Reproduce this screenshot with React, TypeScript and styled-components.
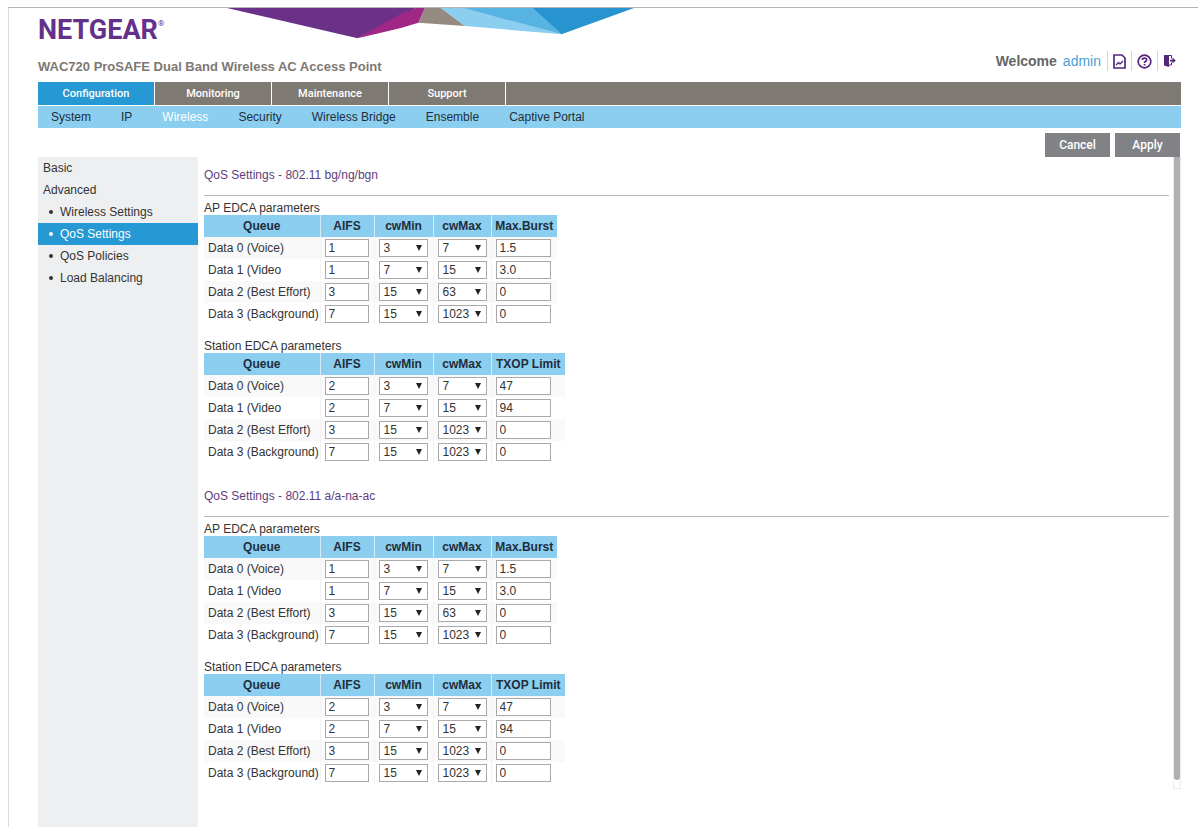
import React, { useId, useState } from "react";
import styled, { createGlobalStyle } from "styled-components";

const sans = '"Liberation Sans", Arial, Helvetica, sans-serif';

const GlobalStyle = createGlobalStyle`
  *, *::before, *::after { box-sizing: border-box; }
  body {
    margin: 0;
    padding: 7px 0 7px 8px;
    background: #fff;
    color: #333;
    font: 12px/22px ${sans};
  }
  button, input, select { font: inherit; color: inherit; }
`;

const Page = styled.div`
  display: flex;
  flex-direction: column;
  min-height: calc(100vh - 14px);
  padding: 0 17px 0 29px;
  border-top: 1px solid #b4b4b6;
  border-left: 1px solid #dcdcdc;
`;

const Header = styled.header`
  display: flex;
  height: 42px;
`;

const Logo = styled.div`
  flex: 0 0 189px;
  padding-top: 6px;
  color: #63308a;
  font: 700 27px/32px Roboto, ${sans};
  sup {
    font-size: 8px;
    font-weight: 400;
    line-height: 8px;
    vertical-align: 13px;
  }
`;

const TitleBar = styled.div`
  display: flex;
  justify-content: space-between;
  height: 32px;
`;

const Product = styled.h1`
  margin: 6px 0 0;
  color: #7d7873;
  font-size: 13px;
  line-height: 22px;
`;

const Account = styled.div`
  display: flex;
  height: 20px;
  margin-top: 1px;
  align-items: center;
  color: #666;
  font-size: 14px;
  font-weight: 700;
  line-height: 20px;
`;

const UserLink = styled.a`
  margin: 0 6px;
  color: #4a9fd4;
  font-weight: 400;
  text-decoration: none;
`;

const IconButton = styled.button`
  display: flex;
  align-items: center;
  height: 20px;
  padding: 0 5px;
  border: 0;
  border-left: 1px solid #d3d3d3;
  background: none;
  cursor: pointer;
`;

const Tabs = styled.nav`
  display: flex;
  height: 23px;
  margin-bottom: 1px;
  background: #7f7973;
`;

const Tab = styled.a<{ $active?: boolean }>`
  width: 117px;
  border-right: 1px solid #fff;
  background: ${(p) => (p.$active ? "#2698d3" : "transparent")};
  color: #fff;
  font: 500 11px/23px Roboto, ${sans};
  text-align: center;
  text-decoration: none;
`;

const SubTabs = styled.nav`
  display: flex;
  gap: 30px;
  height: 22px;
  padding-left: 13px;
  background: #8bcef0;
`;

const SubTab = styled.a<{ $active?: boolean }>`
  color: ${(p) => (p.$active ? "#fff" : "#222f3a")};
  text-decoration: none;
`;

const Actions = styled.div`
  display: flex;
  justify-content: flex-end;
  gap: 5px;
  padding: 5px 1px 0 0;
`;

const ActionButton = styled.button`
  width: 65px;
  height: 24px;
  padding: 0;
  border: 0;
  background: #818285;
  color: #fff;
  font: 500 12px/24px Roboto, ${sans};
  cursor: pointer;
`;

const Body = styled.div`
  display: flex;
  flex: 1;
`;

const Sidebar = styled.nav`
  flex: 0 0 160px;
  background: #eeeff0;
`;

const SideLink = styled.a<{ $sub?: boolean; $active?: boolean }>`
  display: flex;
  align-items: center;
  height: 22px;
  padding-left: ${(p) => (p.$sub ? "11px" : "5px")};
  background: ${(p) => (p.$active ? "#2698d3" : "transparent")};
  color: ${(p) => (p.$active ? "#fff" : "#333")};
  text-decoration: none;
  &::before {
    content: "";
    display: ${(p) => (p.$sub ? "block" : "none")};
    width: 4px;
    height: 4px;
    margin-right: 7px;
    border-radius: 2px;
    background: currentColor;
  }
`;

const Main = styled.main`
  flex: 1;
  min-width: 0;
  padding: 0 4px 0 6px;
`;

const ScrollTrack = styled.div`
  display: flex;
  flex: 0 0 8px;
  flex-direction: column;
  margin-bottom: 38px;
  border: 1px solid #ececec;
  border-top: 0;
`;

const ScrollThumb = styled.div`
  flex: 1;
  margin-bottom: 8px;
  border-radius: 0 0 3px 3px;
  background: #afb0b4;
`;

const BandTitle = styled.h2`
  margin: 0 0 6px;
  padding: 7px 0 9px;
  border-bottom: 1px solid #b8b8b8;
  color: #5f3d7c;
  font-size: 12px;
  font-weight: 400;
`;

const Table = styled.table`
  margin-bottom: 15px;
  border-collapse: collapse;
  table-layout: fixed;
  width: 0;
  caption {
    height: 13px;
    line-height: 12px;
    text-align: left;
    white-space: nowrap;
  }
  tbody tr:nth-child(odd) { background: #f9f9f9; }
`;

const HeadCell = styled.th<{ $width: number }>`
  width: ${(p) => p.$width}px;
  height: 22px;
  padding: 0;
  border-right: 1px solid #d3ebf8;
  background: #8bcef0;
  color: #1f2d3a;
  white-space: nowrap;
  &:last-child { border-right: 0; }
`;

const Cell = styled.td`
  height: 22px;
  padding: 0 0 0 4px;
  border-right: 1px solid #f3f3f3;
  line-height: 18px;
  white-space: nowrap;
  &:last-child { border-right: 0; }
`;

const Field = styled.input<{ $width: number }>`
  display: block;
  width: ${(p) => p.$width}px;
  height: 18px;
  padding: 0 3px;
  border: 1px solid #a9a9a9;
  border-radius: 0;
  background: #fff;
  line-height: 16px;
`;

const SelectBox = styled.span`
  display: grid;
  width: 49px;
  height: 18px;
  align-items: center;
  > * { grid-area: 1 / 1; }
  svg {
    justify-self: end;
    margin-right: 6px;
    pointer-events: none;
  }
`;

const Select = styled.select`
  appearance: none;
  width: 49px;
  height: 18px;
  padding: 0 0 0 4px;
  border: 1px solid #a9a9a9;
  border-radius: 0;
  background: #fff;
  line-height: 16px;
`;

const Banner = () => (
  <svg width="408" height="31" viewBox="227 8 408 31" aria-hidden="true">
    <path d="M227 8H416L357.500 38.300Z" fill="#6b3189" />
    <path d="M416 8H425L418.500 22.800L401 28L357.500 38.300L400 14Z" fill="#9f2886" />
    <path d="M425 8H441L465 26L418.500 22.800Z" fill="#968b80" />
    <path d="M441 8H468L561.500 34.300L465 26Z" fill="#8bcef0" />
    <path d="M464 8H534L561.500 34.300Z" fill="#57b3e2" />
    <path d="M533 8H634L561.500 34.300Z" fill="#2794cf" />
  </svg>
);

const ReportIcon = () => (
  <svg width="13" height="15" viewBox="0 0 13 15" fill="none" stroke="#54277a" strokeWidth="1.700">
    <path d="M1 1H9L12 4V14H1Z" />
    <path d="M3 11L5.500 8.500L7 10L10 7" strokeWidth="1.300" />
  </svg>
);

const HelpIcon = () => (
  <svg width="15" height="15" viewBox="0 0 15 15" fill="none" stroke="#54277a" strokeWidth="1.700">
    <circle cx="7.500" cy="7.500" r="6.300" />
    <path d="M5.300 6C5.300 3.500 9.700 3.500 9.700 5.900C9.700 7.300 7.500 7.200 7.500 8.900" />
    <path d="M7.500 10V11.500" />
  </svg>
);

const ExitIcon = () => (
  <svg width="13" height="15" viewBox="0 0 13 15">
    <path d="M1 1L6 2V13L1 11.500Z" fill="#54277a" />
    <path d="M2 1.500H8.500V4.500M8.500 8.500V11H6" fill="none" stroke="#54277a" />
    <path d="M7 5.700H9.500V3.500L12.800 6.500L9.500 9.500V7.500H7Z" fill="#54277a" />
  </svg>
);

const Arrow = () => (
  <svg width="6" height="6" viewBox="0 0 6 6" aria-hidden="true">
    <path d="M0 0H6L3 6Z" fill="#222" />
  </svg>
);

type Row = [queue: string, aifs: string, cwMin: string, cwMax: string, last: string];

const apRows: Row[] = [
  ["Data 0 (Voice)", "1", "3", "7", "1.5"],
  ["Data 1 (Video", "1", "7", "15", "3.0"],
  ["Data 2 (Best Effort)", "3", "15", "63", "0"],
  ["Data 3 (Background)", "7", "15", "1023", "0"],
];

const stationRows: Row[] = [
  ["Data 0 (Voice)", "2", "3", "7", "47"],
  ["Data 1 (Video", "2", "7", "15", "94"],
  ["Data 2 (Best Effort)", "3", "15", "1023", "0"],
  ["Data 3 (Background)", "7", "15", "1023", "0"],
];

const windowSizes = ["1", "3", "7", "15", "31", "63", "127", "255", "511", "1023"];

function WindowSelect({ label, initial }: { label: string; initial: string }) {
  const [value, setValue] = useState(initial);
  return (
    <SelectBox>
      <Select aria-label={label} value={value} onChange={(e) => setValue(e.target.value)}>
        {windowSizes.map((size) => (
          <option key={size}>{size}</option>
        ))}
      </Select>
      <Arrow />
    </SelectBox>
  );
}

function EdcaTable({ caption, last, lastWidth, rows }: { caption: string; last: string; lastWidth: number; rows: Row[] }) {
  const id = useId();
  return (
    <Table>
      <caption>{caption}</caption>
      <thead>
        <tr>
          <HeadCell $width={116}>Queue</HeadCell>
          <HeadCell $width={54}>AIFS</HeadCell>
          <HeadCell $width={59}>cwMin</HeadCell>
          <HeadCell $width={58}>cwMax</HeadCell>
          <HeadCell $width={lastWidth}>{last}</HeadCell>
        </tr>
      </thead>
      <tbody>
        {rows.map(([queue, aifs, cwMin, cwMax, limit], i) => (
          <tr key={queue}>
            <Cell id={`${id}-${i}`}>{queue}</Cell>
            <Cell><Field $width={44} aria-label={`${queue} AIFS`} defaultValue={aifs} /></Cell>
            <Cell><WindowSelect label={`${queue} cwMin`} initial={cwMin} /></Cell>
            <Cell><WindowSelect label={`${queue} cwMax`} initial={cwMax} /></Cell>
            <Cell><Field $width={55} aria-label={`${queue} ${last}`} defaultValue={limit} /></Cell>
          </tr>
        ))}
      </tbody>
    </Table>
  );
}

const tabs = ["Configuration", "Monitoring", "Maintenance", "Support"];
const subTabs = ["System", "IP", "Wireless", "Security", "Wireless Bridge", "Ensemble", "Captive Portal"];
const sideItems = ["Wireless Settings", "QoS Settings", "QoS Policies", "Load Balancing"];
const bands = ["802.11 bg/ng/bgn", "802.11 a/a-na-ac"];

export default function App() {
  return (
    <>
      <GlobalStyle />
      <Page>
        <Header>
          <Logo>NETGEAR<sup>®</sup></Logo>
          <Banner />
        </Header>
        <TitleBar>
          <Product>WAC720 ProSAFE Dual Band Wireless AC Access Point</Product>
          <Account>
            Welcome
            <UserLink href="#account">admin</UserLink>
            <IconButton aria-label="Report"><ReportIcon /></IconButton>
            <IconButton aria-label="Help"><HelpIcon /></IconButton>
            <IconButton aria-label="Log out"><ExitIcon /></IconButton>
          </Account>
        </TitleBar>
        <Tabs>
          {tabs.map((tab, i) => (
            <Tab key={tab} href="#tab" $active={i === 0}>{tab}</Tab>
          ))}
        </Tabs>
        <SubTabs>
          {subTabs.map((tab) => (
            <SubTab key={tab} href="#section" $active={tab === "Wireless"}>{tab}</SubTab>
          ))}
        </SubTabs>
        <Actions>
          <ActionButton>Cancel</ActionButton>
          <ActionButton>Apply</ActionButton>
        </Actions>
        <Body>
          <Sidebar>
            <SideLink href="#basic">Basic</SideLink>
            <SideLink href="#advanced">Advanced</SideLink>
            {sideItems.map((item) => (
              <SideLink key={item} href="#item" $sub $active={item === "QoS Settings"}>{item}</SideLink>
            ))}
          </Sidebar>
          <Main>
            {bands.map((band) => (
              <section key={band}>
                <BandTitle>QoS Settings - {band}</BandTitle>
                <EdcaTable caption="AP EDCA parameters" last="Max.Burst" lastWidth={66} rows={apRows} />
                <EdcaTable caption="Station EDCA parameters" last="TXOP Limit" lastWidth={74} rows={stationRows} />
              </section>
            ))}
          </Main>
          <ScrollTrack>
            <ScrollThumb />
          </ScrollTrack>
        </Body>
      </Page>
    </>
  );
}
